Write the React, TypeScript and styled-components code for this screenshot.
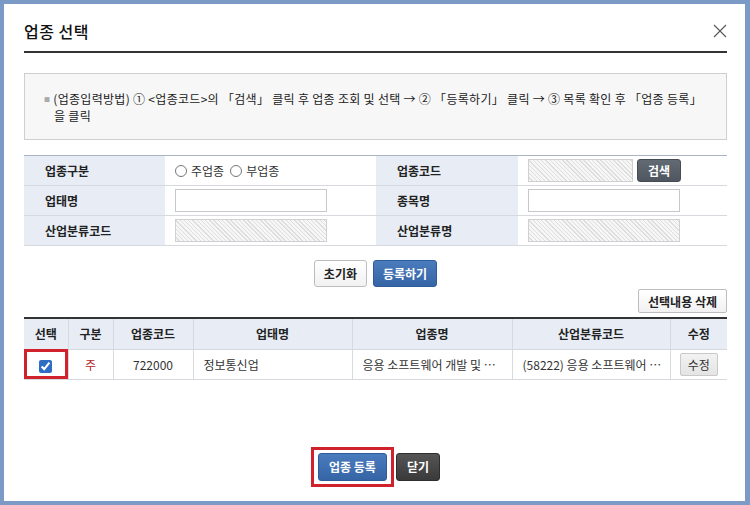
import styled, { createGlobalStyle } from 'styled-components'

const GlobalStyle = createGlobalStyle`
  html, body {
    margin: 0;
    padding: 0;
    background: #7b9bc6;
  }
  * {
    box-sizing: border-box;
  }
  body {
    font-family: "Noto Sans CJK KR", "Noto Sans", sans-serif;
    font-size: 12px;
    color: #333;
  }
`

const Frame = styled.div`
  width: 750px;
  height: 505px;
  border-style: solid;
  border-color: #7b9bc6;
  border-width: 4px 5px 4px 4px;
  background: #fff;
  padding: 0 18px 0 20px;
  display: flex;
  flex-direction: column;
`

const Header = styled.div`
  height: 49px;
  padding-top: 6px;
  display: flex;
  align-items: center;
  justify-content: space-between;
  border-bottom: 2px solid #333;
`

const Title = styled.h1`
  margin: 0;
  font-size: 16px;
  font-weight: 500;
  color: #111;
  letter-spacing: 0.5px;
`

const CloseButton = styled.button`
  border: 0;
  background: none;
  padding: 0;
  width: 16px;
  height: 16px;
  margin-right: -1px;
  display: flex;
  cursor: pointer;
`

const InfoBox = styled.div`
  margin-top: 20px;
  height: 67px;
  border: 1px solid #cfcfcf;
  background: #f7f7f7;
  padding: 17px 10px 0 29px;
  line-height: 16px;
  color: #222;
  letter-spacing: 0.3px;
  text-indent: -10px;
`

const Bullet = styled.span`
  color: #aaa;
  font-size: 6px;
  margin-right: 3px;
  vertical-align: 2px;
`

const FormGrid = styled.div`
  margin-top: 15px;
  display: grid;
  grid-template-columns: 141px 211px 142px 209px;
  grid-auto-rows: 30px;
  border-top: 1px solid #a9b4c4;
`

const Label = styled.div`
  background: #e8edf5;
  font-weight: bold;
  color: #222;
  padding-left: 21px;
  display: flex;
  align-items: center;
  border-bottom: 1px solid #d6d9de;
`

const Value = styled.div`
  padding-left: 10px;
  display: flex;
  align-items: center;
  gap: 2px;
  border-bottom: 1px solid #d6d9de;
`

const TextInput = styled.input<{ $w?: number }>`
  width: ${(p) => p.$w ?? 152}px;
  height: 23px;
  border: 1px solid #c8c8c8;
  padding: 0 4px;
  font-family: inherit;
  font-size: 12px;
  background: #fff;
  &:disabled {
    background: repeating-linear-gradient(45deg, #f6f6f6 0 2px, #dedede 2px 3px);
    border-color: #d0d0d0;
  }
`

const RadioLabel = styled.label`
  display: inline-flex;
  align-items: center;
  margin-right: 4px;
  color: #333;
  input {
    margin: 0 4px 0 0;
    width: 12px;
    height: 12px;
  }
`

const Btn = styled.button<{ $variant?: 'blue' | 'dark' | 'light' | 'gray' }>`
  font-family: inherit;
  font-size: 12px;
  font-weight: bold;
  height: 27px;
  padding: 0 9px;
  border-radius: 3px;
  cursor: pointer;
  border: 1px solid;
  ${(p) =>
    p.$variant === 'blue'
      ? `background: linear-gradient(#4a7bbd, #3565a5); border-color: #2e5c98; color: #fff;`
      : p.$variant === 'dark'
      ? `background: linear-gradient(#555, #3a3a3a); border-color: #2e2e2e; color: #fff;`
      : p.$variant === 'gray'
      ? `background: linear-gradient(#f2f2f2, #e4e4e4); border-color: #c9c9c9; color: #333; font-weight: normal;`
      : `background: linear-gradient(#fff, #f1f1f1); border-color: #bdbdbd; color: #222;`}
`

const SearchBtn = styled(Btn)`
  height: 23px;
  width: 44px;
  padding: 0;
  background: linear-gradient(#626a74, #4f565f);
  border-color: #464c54;
  color: #fff;
  margin-left: 2px;
`

const ActionRow = styled.div`
  margin-top: 14px;
  display: flex;
  justify-content: center;
  gap: 6px;
`

const ToolRow = styled.div`
  margin-top: 2px;
  display: flex;
  justify-content: flex-end;
`

const DeleteBtn = styled(Btn)`
  height: 24px;
  padding: 0 9px;
  border-radius: 2px;
`

const ListTable = styled.table`
  margin-top: 4px;
  width: 703px;
  border-collapse: collapse;
  table-layout: fixed;
  border-top: 2px solid #333;
  th, td {
    border: 1px solid #d6d9de;
    border-top: 0;
    height: 30px;
    padding: 0;
    white-space: nowrap;
    overflow: hidden;
  }
  th:first-child, td:first-child {
    border-left: 0;
  }
  th:last-child, td:last-child {
    border-right: 0;
  }
  th {
    background: #e8edf5;
    font-weight: bold;
    color: #222;
    height: 31px;
  }
`

const Cell = styled.td<{ $align?: 'left' | 'center' }>`
  text-align: ${(p) => p.$align ?? 'center'};
  padding-left: ${(p) => (p.$align === 'left' ? '10px' : '0')} !important;
  color: #333;
`

const PickCell = styled.td`
  text-align: center;
  outline: 3px solid #d0222c;
  outline-offset: -3px;
  input {
    margin: 0;
    width: 13px;
    height: 13px;
    accent-color: #2f6dc4;
    vertical-align: middle;
  }
`

const TypeCell = styled(Cell)`
  color: #b3262e;
`

const EditBtn = styled(Btn)`
  height: 23px;
  padding: 0 7px;
  border-radius: 2px;
`

const Footer = styled.div`
  margin-top: 67px;
  display: flex;
  justify-content: center;
  align-items: center;
  gap: 2px;
`

const Highlight = styled.div`
  border: 3px solid #d0222c;
  padding: 3px 4px;
  display: flex;
`

const BigBtn = styled(Btn)`
  height: 28px;
  padding: 0 10px;
`

const CloseIcon = () => (
  <svg width="16" height="16" viewBox="0 0 16 16">
    <path d="M2 2 L14 14 M14 2 L2 14" stroke="#555" strokeWidth="1.1" fill="none" />
  </svg>
)

const rows = [
  {
    gubun: '주',
    code: '722000',
    uptae: '정보통신업',
    upjong: '응용 소프트웨어 개발 및 …',
    sanup: '(58222) 응용 소프트웨어 …',
  },
]

export default function App() {
  return (
    <>
      <GlobalStyle />
      <Frame>
        <Header>
          <Title>업종 선택</Title>
          <CloseButton aria-label="닫기">
            <CloseIcon />
          </CloseButton>
        </Header>

        <InfoBox>
          <Bullet>■</Bullet>(업종입력방법) ① &lt;업종코드&gt;의 「검색」 클릭 후 업종 조회 및 선택 → ② 「등록하기」 클릭 → ③ 목록 확인 후 「업종 등록」
          <br />을 클릭
        </InfoBox>

        <FormGrid>
          <Label>업종구분</Label>
          <Value>
            <RadioLabel>
              <input type="radio" name="gubun" />주업종
            </RadioLabel>
            <RadioLabel>
              <input type="radio" name="gubun" />부업종
            </RadioLabel>
          </Value>
          <Label>업종코드</Label>
          <Value>
            <TextInput $w={105} disabled />
            <SearchBtn>검색</SearchBtn>
          </Value>

          <Label>업태명</Label>
          <Value>
            <TextInput />
          </Value>
          <Label>종목명</Label>
          <Value>
            <TextInput />
          </Value>

          <Label>산업분류코드</Label>
          <Value>
            <TextInput disabled />
          </Value>
          <Label>산업분류명</Label>
          <Value>
            <TextInput disabled />
          </Value>
        </FormGrid>

        <ActionRow>
          <Btn $variant="light">초기화</Btn>
          <Btn $variant="blue">등록하기</Btn>
        </ActionRow>

        <ToolRow>
          <DeleteBtn $variant="light">선택내용 삭제</DeleteBtn>
        </ToolRow>

        <ListTable>
          <colgroup>
            <col style={{ width: 44 }} />
            <col style={{ width: 45 }} />
            <col style={{ width: 80 }} />
            <col style={{ width: 159 }} />
            <col style={{ width: 160 }} />
            <col style={{ width: 158 }} />
            <col style={{ width: 57 }} />
          </colgroup>
          <thead>
            <tr>
              <th>선택</th>
              <th>구분</th>
              <th>업종코드</th>
              <th>업태명</th>
              <th>업종명</th>
              <th>산업분류코드</th>
              <th>수정</th>
            </tr>
          </thead>
          <tbody>
            {rows.map((r) => (
              <tr key={r.code}>
                <PickCell>
                  <input type="checkbox" defaultChecked />
                </PickCell>
                <TypeCell>{r.gubun}</TypeCell>
                <Cell>{r.code}</Cell>
                <Cell $align="left">{r.uptae}</Cell>
                <Cell $align="left">{r.upjong}</Cell>
                <Cell $align="left">{r.sanup}</Cell>
                <Cell>
                  <EditBtn $variant="gray">수정</EditBtn>
                </Cell>
              </tr>
            ))}
          </tbody>
        </ListTable>

        <Footer>
          <Highlight>
            <BigBtn $variant="blue">업종 등록</BigBtn>
          </Highlight>
          <BigBtn $variant="dark">닫기</BigBtn>
        </Footer>
      </Frame>
    </>
  )
}
